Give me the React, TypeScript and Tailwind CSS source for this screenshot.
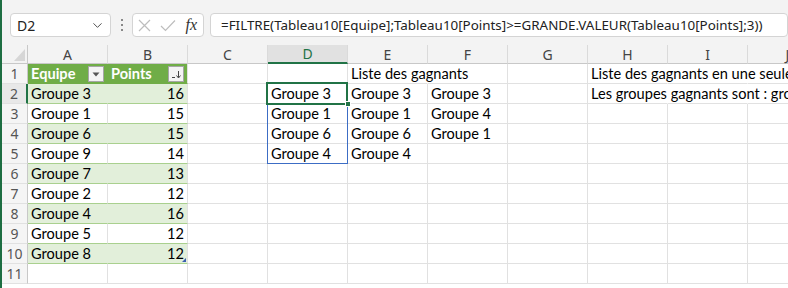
import { ChevronDown } from "lucide-react";

type CellSpec = {
  text?: string;
  right?: boolean;
  cls?: string;
  noRight?: boolean;
  children?: React.ReactNode;
};

const cols = ["A", "B", "C", "D", "E", "F", "G", "H", "I", "J"];

const teams: [string, number][] = [
  ["Groupe 3", 16],
  ["Groupe 1", 15],
  ["Groupe 6", 15],
  ["Groupe 9", 14],
  ["Groupe 7", 13],
  ["Groupe 2", 12],
  ["Groupe 4", 16],
  ["Groupe 5", 12],
  ["Groupe 8", 12],
];

const winnersD = ["Groupe 3", "Groupe 1", "Groupe 6", "Groupe 4"];
const winnersF = ["Groupe 3", "Groupe 4", "Groupe 1"];

function Cell({ text, right, cls = "", noRight, children }: CellSpec) {
  return (
    <div
      className={`relative flex h-[20px] w-[80px] shrink-0 items-center whitespace-nowrap border-b px-[3px] ${
        noRight ? "border-r border-r-transparent" : "border-r"
      } ${right ? "justify-end" : ""} ${cls}`}
    >
      {text}
      {children}
    </div>
  );
}

function FilterButton({ sort }: { sort?: boolean }) {
  return (
    <div className="ml-auto flex h-[16px] w-[16px] items-center justify-center border border-[#a6a6a6] bg-[#f4f4f4]">
      {sort ? (
        <svg width="12" height="12" viewBox="0 0 12 12">
          <path d="M2 9.5h3" stroke="#444" strokeWidth="1" />
          <path d="M8.5 3v6.5" stroke="#444" strokeWidth="1" />
          <path d="M6.5 7.5l2 2.5 2-2.5" fill="none" stroke="#444" strokeWidth="1" />
        </svg>
      ) : (
        <svg width="10" height="10" viewBox="0 0 10 10">
          <path d="M1.5 3.5h7L5 7.5z" fill="#555" />
        </svg>
      )}
    </div>
  );
}

function RowHeader({ n, active }: { n: number; active?: boolean }) {
  return (
    <div
      className={`flex h-[20px] w-[26px] shrink-0 items-center justify-center border-b border-[#e1e1e1] text-[#555] ${
        active ? "border-r-2 border-r-[#217346] bg-[#e8e8e8]" : "border-r border-r-[#c8c8c8] bg-[#f5f5f5]"
      }`}
    >
      {n}
    </div>
  );
}

export default function App() {
  const rows = Array.from({ length: 11 }, (_, i) => i + 1);

  function cellsFor(r: number) {
    const out: React.ReactNode[] = [];
    // A and B
    if (r === 1) {
      out.push(
        <Cell key="A" cls="border-[#70ad47] bg-[#70ad47] font-bold text-white">
          <span>Equipe</span>
          <FilterButton />
        </Cell>
      );
      out.push(
        <Cell key="B" cls="border-b-[#70ad47] border-r-[#e1e1e1] bg-[#70ad47] font-bold text-white">
          <span>Points</span>
          <FilterButton sort />
        </Cell>
      );
    } else if (r <= 10) {
      const [name, pts] = teams[r - 2];
      const band = r % 2 === 0;
      out.push(
        <Cell
          key="A"
          text={name}
          cls={`border-b-[#a9d08e] ${band ? "border-r-[#e2efda] bg-[#e2efda]" : "border-r-[#e1e1e1]"}`}
        />
      );
      out.push(
        <Cell
          key="B"
          text={String(pts)}
          right
          cls={`border-b-[#a9d08e] border-r-[#e1e1e1] ${band ? "bg-[#e2efda]" : ""}`}
        >
          {r === 10 && (
            <svg className="absolute bottom-[1px] right-[1px]" width="4" height="4" viewBox="0 0 4 4">
              <path d="M4 0v4H0z" fill="#3a5fb0" />
            </svg>
          )}
        </Cell>
      );
    } else {
      out.push(<Cell key="A" cls="border-[#e1e1e1]" />);
      out.push(<Cell key="B" cls="border-[#e1e1e1]" />);
    }
    // C
    out.push(<Cell key="C" cls="border-[#e1e1e1]" />);
    // D
    const d = r >= 2 && r <= 5 ? winnersD[r - 2] : undefined;
    out.push(
      <Cell key="D" text={d} cls="border-[#e1e1e1]">
        {r === 2 && (
          <>
            <div className="absolute left-[-1px] top-[-1px] z-10 h-[81px] w-[81px] border border-[#3c6dc5]" />
            <div className="absolute left-[-2px] top-[-2px] z-20 h-[23px] w-[82px] border-2 border-[#217346]" />
            <div className="absolute bottom-[-4px] right-[-4px] z-30 h-[6px] w-[6px] border border-white bg-[#217346]" />
          </>
        )}
      </Cell>
    );
    // E
    const e = r === 1 ? "Liste des gagnants" : r >= 2 && r <= 5 ? winnersD[r - 2] : undefined;
    out.push(<Cell key="E" text={e} noRight={r === 1} cls="border-[#e1e1e1]" />);
    // F
    const f = r >= 2 && r <= 4 ? winnersF[r - 2] : undefined;
    out.push(<Cell key="F" text={f} cls="border-[#e1e1e1]" />);
    // G
    out.push(<Cell key="G" cls="border-[#e1e1e1]" />);
    // H, I, J
    const h =
      r === 1
        ? "Liste des gagnants en une seule cellule"
        : r === 2
        ? "Les groupes gagnants sont : groupe 3, groupe 1, groupe 6, groupe 4"
        : undefined;
    out.push(<Cell key="H" text={h} noRight={r <= 2} cls="border-[#e1e1e1]" />);
    out.push(<Cell key="I" noRight={r <= 2} cls="border-[#e1e1e1]" />);
    out.push(<Cell key="J" noRight={r <= 2} cls="border-[#e1e1e1]" />);
    return out;
  }

  return (
    <div className="h-[288px] w-[788px] overflow-hidden border-l-2 border-[#1e6e42] bg-white font-['Lato',sans-serif] text-[14.6px] text-black">
      {/* formula bar */}
      <div className="flex h-[45px] items-start bg-[#f3f3f3] pt-[13px] font-['Noto_Sans',sans-serif] text-[14px]">
        <div className="ml-[8px] flex h-[24px] w-[101px] items-center rounded-[4px] border border-[#d4d4d4] bg-white pl-[6px] pr-[5px] text-[#222]">
          <span>D2</span>
          <ChevronDown className="ml-auto h-[15px] w-[15px] text-[#444]" strokeWidth={1.5} />
        </div>
        <div className="ml-[10px] flex h-[24px] flex-col items-center justify-center gap-[3px]">
          <span className="h-[2px] w-[2px] bg-[#888]" />
          <span className="h-[2px] w-[2px] bg-[#888]" />
          <span className="h-[2px] w-[2px] bg-[#888]" />
        </div>
        <div className="ml-[9px] flex h-[24px] w-[72px] items-center rounded-[4px] border border-[#d4d4d4] bg-white px-[5px]">
          <svg width="13" height="13" viewBox="0 0 13 13">
            <path d="M1 1l11 11M12 1L1 12" stroke="#bdbdbd" strokeWidth="1.2" />
          </svg>
          <svg className="ml-[9px]" width="16" height="13" viewBox="0 0 16 13">
            <path d="M1 7l4.5 4.5L15 1.5" fill="none" stroke="#bdbdbd" strokeWidth="1.2" />
          </svg>
          <span className="ml-auto pr-[1px] font-['Liberation_Serif',serif] text-[16px] italic leading-none text-[#333]">
            fx
          </span>
        </div>
        <div className="ml-[6px] flex h-[24px] flex-1 items-center whitespace-nowrap rounded-[4px] border border-[#d4d4d4] bg-white pl-[10px] text-[13.4px] text-[#222]">
          =FILTRE(Tableau10[Equipe];Tableau10[Points]&gt;=GRANDE.VALEUR(Tableau10[Points];3))
        </div>
      </div>

      {/* column headers */}
      <div className="flex h-[19px] font-['Noto_Sans',sans-serif] text-[14px] text-[#444]">
        <div className="flex w-[26px] shrink-0 items-end justify-end border-b border-r border-[#c8c8c8] bg-[#f3f3f3] pb-[2px] pr-[2px]">
          <svg width="11" height="12" viewBox="0 0 11 12">
            <path d="M11 0v12H0z" fill="#d6d6d6" />
          </svg>
        </div>
        {cols.map((c) => (
          <div
            key={c}
            className={`flex w-[80px] shrink-0 items-center justify-center border-r border-[#dadada] ${
              c === "D"
                ? "border-b-2 border-b-[#217346] bg-[#e1e1e1] text-[#217346]"
                : "border-b border-b-[#c8c8c8] bg-[#f3f3f3]"
            }`}
          >
            {c}
          </div>
        ))}
      </div>

      {/* grid */}
      {rows.map((r) => (
        <div key={r} className="flex">
          <div className="font-['Noto_Sans',sans-serif] text-[14px]">
            <RowHeader n={r} active={r === 2} />
          </div>
          {cellsFor(r)}
        </div>
      ))}
    </div>
  );
}
